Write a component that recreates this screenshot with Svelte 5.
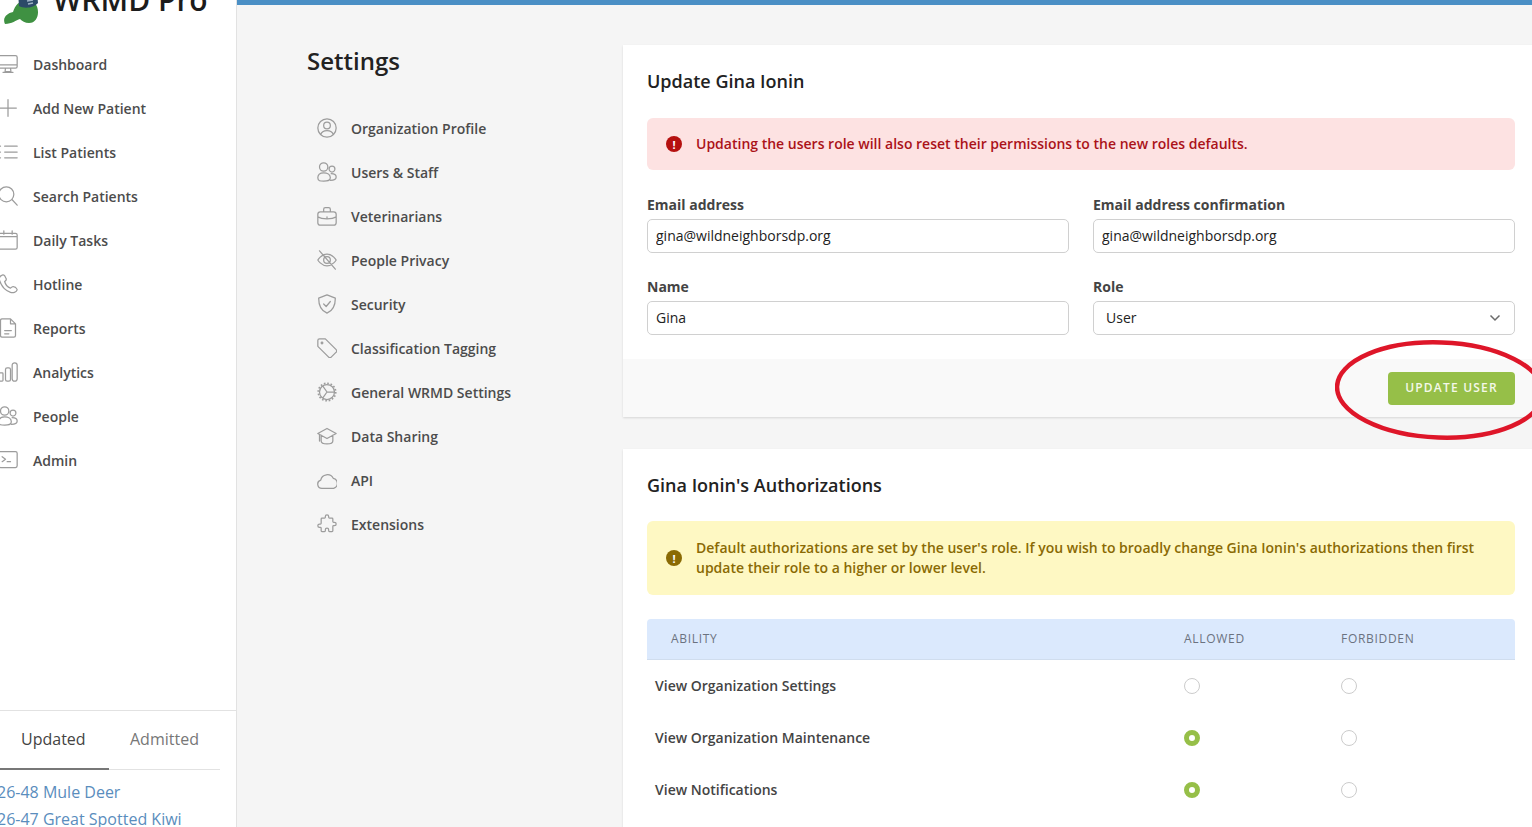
<script>
  const icons = {
    monitor: 'M3 2h18a2 2 0 012 2v11a2 2 0 01-2 2H3a2 2 0 01-2-2V4a2 2 0 012-2z M1 13h22 M9 17l-.5 4h7L15 17 M6 22h12',
    plus: 'M12 2v20 M2 12h20',
    list: 'M8 5h15 M8 12h15 M8 19h15 M0 5h3 M0 12h3 M0 19h3',
    search: 'M10 1a9 9 0 100 18 9 9 0 000-18z M17 16.500l6 6.500',
    calendar: 'M3 4h18a2 2 0 012 2v15a2 2 0 01-2 2H3a2 2 0 01-2-2V6a2 2 0 012-2z M1 8h22 M7 1v4 M17 1v4',
    phone: 'M4 2C2 3 1 5 2 8c2 6 7 12 13 14 3 1 7 0 8-3 0-1-1-2-2-3l-3-1c-1 0-2 1-3 2-3-1-6-4-7-8 1-1 2-1 2-3L8 2C7 1 5 1 4 2z',
    file: 'M5 1h10l6 6v14a2 2 0 01-2 2H5a2 2 0 01-2-2V3a2 2 0 012-2z M15 1v6h6 M8 15h8 M8 19h5',
    bars: 'M2 13h3a1 1 0 011 1v8a1 1 0 01-1 1H2a1 1 0 01-1-1v-8a1 1 0 011-1z M11 7h2a2 2 0 012 2v12a2 2 0 01-2 2h-2a2 2 0 01-2-2V9a2 2 0 012-2z M20 1a3 3 0 013 3v16a3 3 0 01-6 0V4a3 3 0 013-3z',
    people: 'M8 1a5 5 0 100 10A5 5 0 008 1z M18 5a3.500 3.500 0 100 7 3.500 3.500 0 000-7z M1 19c0-4 3-6 7-6s8 2 8 6-4 4-8 4-7 0-7-4z M17 14c3 0 6 1 6 4s-3 4-7 4',
    terminal: 'M3 2h18a2 2 0 012 2v15a2 2 0 01-2 2H3a2 2 0 01-2-2V4a2 2 0 012-2z M5 8l4 3-4 3 M11 14h4',
    profile: 'M12 1a11 11 0 100 22 11 11 0 000-22z M12 5a4 4 0 100 8 4 4 0 000-8z M4.500 20c1-4 4-5 7.500-5s6.500 1 7.500 5',
    case: 'M4 7h16a3 3 0 013 3v10a3 3 0 01-3 3H4a3 3 0 01-3-3V10a3 3 0 013-3z M8 7V4a2 2 0 012-2h4a2 2 0 012 2v3 M1 13c3 2 7 2.500 11 2.500s8-.5 11-2.500 M12 13v1',
    eyeoff: 'M1 12s4-7 11-7 11 7 11 7-4 7-11 7-11-7-11-7z M12 8a4 4 0 100 8 4 4 0 000-8z M3 1l19 22',
    shield: 'M12 1l10 4c0 10-3 15-10 18C5 20 2 15 2 5z M8 12l3 3 5-6',
    tag: 'M3 1h7l13 13a2 2 0 010 3l-6 6a2 2 0 01-3 0L1 10V3a2 2 0 012-2z M6 5a1 1 0 100 2 1 1 0 000-2z',
    cog: 'M12 3a9 9 0 100 18 9 9 0 000-18z M12 12h9 M12 12L7 5 M12 12l-5 7',
    cap: 'M12 3L1 9l11 6 11-6z M5 11v7c0 2 3 3.500 7 3.500s7-1.500 7-3.500v-7 M3 10v8',
    cloud: 'M6 22a5 5 0 01-1.500-9.800 8 8 0 0115-2.200 6.200 6.200 0 01.5 12z',
    puzzle: 'M10 3a2 2 0 114 0v1a1 1 0 001 1h3a1 1 0 011 1v3a1 1 0 001 1h1a2 2 0 110 4h-1a1 1 0 00-1 1v5a1 1 0 01-1 1h-3a1 1 0 01-1-1v-1a2 2 0 10-4 0v1a1 1 0 01-1 1H6a1 1 0 01-1-1v-3a1 1 0 00-1-1H3a2 2 0 110-4h1a1 1 0 001-1V6a1 1 0 011-1h3a1 1 0 001-1V3z'
  };

  const mainNav = [
    ['Dashboard', 'monitor'],
    ['Add New Patient', 'plus'],
    ['List Patients', 'list'],
    ['Search Patients', 'search'],
    ['Daily Tasks', 'calendar'],
    ['Hotline', 'phone'],
    ['Reports', 'file'],
    ['Analytics', 'bars'],
    ['People', 'people'],
    ['Admin', 'terminal']
  ];

  const settingsNav = [
    ['Organization Profile', 'profile'],
    ['Users & Staff', 'people'],
    ['Veterinarians', 'case'],
    ['People Privacy', 'eyeoff'],
    ['Security', 'shield'],
    ['Classification Tagging', 'tag'],
    ['General WRMD Settings', 'cog'],
    ['Data Sharing', 'cap'],
    ['API', 'cloud'],
    ['Extensions', 'puzzle']
  ];

  const abilities = [
    { name: 'View Organization Settings', allowed: false },
    { name: 'View Organization Maintenance', allowed: true },
    { name: 'View Notifications', allowed: true }
  ];
</script>

{#snippet icon(name)}
  <svg class="icon" viewBox="0 0 24 24" fill="none" aria-hidden="true">
    <path d={icons[name]} stroke="currentColor" stroke-width="1.500" stroke-linecap="round" stroke-linejoin="round" />
    {#if name === 'cog'}
      <circle cx="12" cy="12" r="10.500" stroke="currentColor" stroke-width="2" stroke-dasharray="2 2.120" />
    {/if}
  </svg>
{/snippet}

<div class="app">
  <aside class="sidebar">
    <div class="brand">
      <svg class="logo" viewBox="0 0 36 36" aria-hidden="true">
        <path d="M2 35c-3-6 2-11 8-12 2-6 6-12 14-12 7 0 11 5 11 12 0 6-3 11-9 11-4 0-7-2-9-4-4 1-8 5-15 5z" fill="#3f9142" />
        <path d="M15 4h19l1 10c-4 5-14 6-19 3z" fill="#2c4a68" />
        <path d="M24 12l6-1 M25 15l5-1" stroke="#9fb4c6" stroke-width="1.500" />
      </svg>
      <span>WRMD Pro</span>
    </div>

    <nav class="main-nav">
      {#each mainNav as [label, name]}
        <a href="#top" class="nav-row">
          {@render icon(name)}
          <span>{label}</span>
        </a>
      {/each}
    </nav>

    <div class="recent">
      <div class="tabs">
        <span class="tab active">Updated</span>
        <span class="tab">Admitted</span>
      </div>
      <a href="#top" class="patient">26-48 Mule Deer</a>
      <a href="#top" class="patient">26-47 Great Spotted Kiwi</a>
    </div>
  </aside>

  <main class="content">
    <section class="settings">
      <h1>Settings</h1>
      <nav class="settings-nav">
        {#each settingsNav as [label, name]}
          <a href="#top" class="nav-row">
            {@render icon(name)}
            <span>{label}</span>
          </a>
        {/each}
      </nav>
    </section>

    <section class="panels">
      <div class="card">
        <div class="card-body">
          <h2>Update Gina Ionin</h2>
          <div class="alert danger">
            <span class="alert-dot">!</span>
            <p>Updating the users role will also reset their permissions to the new roles defaults.</p>
          </div>
          <div class="fields">
            <label>
              <span>Email address</span>
              <input type="text" value="gina@wildneighborsdp.org" />
            </label>
            <label>
              <span>Email address confirmation</span>
              <input type="text" value="gina@wildneighborsdp.org" />
            </label>
            <label>
              <span>Name</span>
              <input type="text" value="Gina" />
            </label>
            <label>
              <span>Role</span>
              <div class="select-wrap">
                <select>
                  <option>User</option>
                </select>
                <svg class="chevron" viewBox="0 0 12 8" fill="none" aria-hidden="true">
                  <path d="M1.500 1.500L6 6l4.500-4.500" stroke="#6b6b6b" stroke-width="1.500" />
                </svg>
              </div>
            </label>
          </div>
        </div>
        <div class="card-footer">
          <button type="button">UPDATE USER</button>
        </div>
      </div>

      <div class="card">
        <div class="card-body auth">
          <h2>Gina Ionin's Authorizations</h2>
          <div class="alert warning">
            <span class="alert-dot">!</span>
            <p>Default authorizations are set by the user's role. If you wish to broadly change Gina Ionin's authorizations then first update their role to a higher or lower level.</p>
          </div>
          <div class="table-head">
            <span>ABILITY</span>
            <span class="allowed-head">ALLOWED</span>
            <span>FORBIDDEN</span>
          </div>
          {#each abilities as row}
            <div class="table-row">
              <span class="ability">{row.name}</span>
              <span class="cell allowed"><span class="radio" class:on={row.allowed}></span></span>
              <span class="cell"><span class="radio"></span></span>
            </div>
          {/each}
        </div>
      </div>
    </section>

    <svg class="annotation" viewBox="0 0 220 104" fill="none" aria-hidden="true">
      <ellipse cx="105" cy="52" rx="103" ry="47.500" transform="rotate(2 105 52)" stroke="#de1629" stroke-width="4.500" />
    </svg>
  </main>
</div>

<style>
  :global(body) {
    overflow: hidden;
    background: #f5f5f5;
  }

  .app {
    display: grid;
    grid-template-columns: 237px 1fr;
    height: 827px;
    overflow: hidden;
    font-family: "Open Sans", sans-serif;
    color: #444;
  }

  .sidebar {
    display: flex;
    flex-direction: column;
    background: #fff;
    border-right: 1px solid #e2e2e2;
    overflow: hidden;
    height: 827px;
  }

  .brand {
    display: flex;
    align-items: center;
    gap: 14px;
    height: 36px;
    margin: -11px 0 0 3px;
    font-size: 30px;
    font-weight: 600;
    line-height: 36px;
    color: #1c1c1c;
  }

  .brand span {
    margin-bottom: 15px;
  }

  .logo {
    width: 36px;
    height: 36px;
    flex: none;
  }

  .main-nav {
    display: flex;
    flex-direction: column;
    margin: 17px 0 0 -2px;
  }

  .nav-row {
    display: flex;
    align-items: center;
    gap: 15px;
    height: 44px;
    font-size: 14px;
    font-weight: 600;
    color: #4c4c4c;
    text-decoration: none;
  }

  .icon {
    width: 20px;
    height: 20px;
    flex: none;
    color: #9c9c9c;
  }

  .recent {
    margin-top: auto;
    border-top: 1px solid #e2e2e2;
    height: 116px;
    flex: none;
    padding-right: 16px;
  }

  .tabs {
    display: flex;
    height: 58px;
    border-bottom: 1px solid #e2e2e2;
    margin-bottom: 9px;
  }

  .tab {
    display: flex;
    align-items: center;
    width: 109px;
    box-sizing: border-box;
    padding: 0 0 2px 21px;
    font-size: 16px;
    color: #777;
  }

  .tab.active {
    color: #444;
    border-bottom: 2px solid #777;
    margin-bottom: -1px;
    padding-bottom: 1px;
  }

  .patient {
    display: block;
    margin-left: -3px;
    font-size: 16px;
    line-height: 27px;
    color: #5a8dbd;
    text-decoration: none;
    white-space: nowrap;
  }

  .content {
    position: relative;
    display: grid;
    grid-template-columns: 386px 1fr;
    border-top: 5px solid #4a8fc5;
    height: 827px;
    box-sizing: border-box;
  }

  .settings {
    padding: 39px 0 0 70px;
  }

  h1 {
    margin: 0;
    font-size: 24px;
    font-weight: 600;
    line-height: 34px;
    color: #222;
  }

  .settings-nav {
    display: flex;
    flex-direction: column;
    margin: 28px 0 0 10px;
  }

  .settings-nav .nav-row {
    gap: 14px;
  }

  .panels {
    display: flex;
    flex-direction: column;
    gap: 32px;
    padding-top: 40px;
    margin-right: -7px;
    min-width: 0;
  }

  .card {
    background: #fff;
    box-shadow: 0 1px 2px rgba(0, 0, 0, 0.12);
    flex: none;
  }

  .card-body {
    padding: 24px;
  }

  h2 {
    margin: 0;
    font-size: 18px;
    font-weight: 600;
    line-height: 24px;
    color: #222;
  }

  .alert {
    display: flex;
    align-items: center;
    gap: 14px;
    margin-top: 25px;
    padding: 16px 19px;
    border-radius: 6px;
    font-size: 14px;
    font-weight: 600;
    line-height: 20px;
    box-sizing: border-box;
  }

  .alert p {
    margin: 0;
  }

  .alert-dot {
    display: flex;
    align-items: center;
    justify-content: center;
    width: 16px;
    height: 16px;
    flex: none;
    border-radius: 50%;
    color: #fff;
    font-size: 11px;
    font-weight: 700;
    line-height: 1;
  }

  .danger {
    height: 52px;
    background: #fde2e2;
    color: #ab1219;
  }

  .danger .alert-dot {
    background: #b5100f;
  }

  .warning {
    height: 74px;
    margin-top: 24px;
    background: #fef8c3;
    color: #8a6a04;
  }

  .warning .alert-dot {
    background: #8a6a04;
  }

  .fields {
    display: grid;
    grid-template-columns: 1fr 1fr;
    gap: 24px;
    margin-top: 25px;
  }

  label {
    display: flex;
    flex-direction: column;
    gap: 4px;
    font-size: 14px;
    font-weight: 700;
    line-height: 20px;
    color: #444;
  }

  input,
  select {
    width: 100%;
    height: 34px;
    box-sizing: border-box;
    padding: 0 8px 2px;
    border: 1px solid #d0d0d0;
    border-radius: 5px;
    background: #fff;
    font: 400 14px "Open Sans", sans-serif;
    color: #222;
    appearance: none;
  }

  select {
    padding-left: 12px;
  }

  .select-wrap {
    position: relative;
  }

  .chevron {
    position: absolute;
    top: 13px;
    right: 14px;
    width: 12px;
    height: 8px;
  }

  .card-footer {
    display: flex;
    justify-content: flex-end;
    height: 58px;
    box-sizing: border-box;
    padding: 13px 24px 0 0;
    background: #f9f9f9;
  }

  button {
    width: 127px;
    height: 33px;
    padding: 0 0 2px;
    border: 0;
    border-radius: 4px;
    background: #96bf48;
    color: #f4f8e8;
    font: 600 12px "Open Sans", sans-serif;
    letter-spacing: 1.2px;
  }

  .auth {
    padding-bottom: 60px;
  }

  .table-head,
  .table-row {
    display: grid;
    grid-template-columns: 1fr 156px 198px;
    align-items: center;
  }

  .table-head {
    height: 41px;
    margin-top: 24px;
    padding-bottom: 2px;
    background: #dbe9fd;
    border-bottom: 1px solid #d0ddee;
    border-radius: 4px 4px 0 0;
    box-sizing: border-box;
    font-size: 12px;
    font-weight: 500;
    letter-spacing: 0.7px;
    color: #6b7280;
  }

  .table-head span {
    padding-left: 24px;
  }

  .table-head .allowed-head {
    padding-left: 23px;
  }

  .table-row {
    height: 52px;
    font-size: 14px;
    font-weight: 600;
    color: #444;
  }

  .ability {
    padding: 0 0 2px 8px;
  }

  .cell {
    display: flex;
    padding-left: 24px;
  }

  .cell.allowed {
    padding-left: 23px;
  }

  .radio {
    width: 16px;
    height: 16px;
    box-sizing: border-box;
    border: 1px solid #ccc;
    border-radius: 50%;
    background: #fff;
  }

  .radio.on {
    border: 5px solid #96bf48;
  }

  .annotation {
    position: absolute;
    top: 333px;
    left: 1098px;
    width: 220px;
    height: 104px;
  }
</style>
